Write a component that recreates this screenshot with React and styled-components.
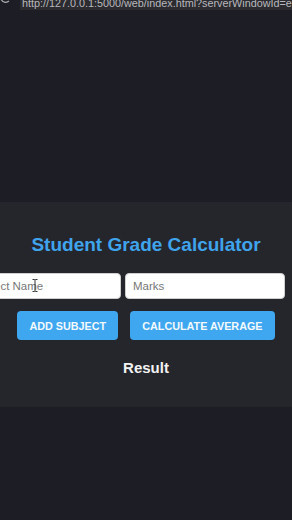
import React from "react";
import styled, { createGlobalStyle } from "styled-components";

const Global = createGlobalStyle`
  html, body { margin: 0; padding: 0; }
  body {
    background: #1d1e25;
    width: 292px;
    height: 520px;
    overflow: hidden;
    font-family: "Liberation Sans", Arial, sans-serif;
  }
`;

const Page = styled.div`
  width: 292px;
  height: 520px;
  display: flex;
  flex-direction: column;
  background: #1d1e25;
  overflow: hidden;
`;

const TopBar = styled.div`
  height: 10px;
  display: flex;
  align-items: flex-end;
  overflow: hidden;
  flex-shrink: 0;
`;

const ReloadSlot = styled.div`
  width: 20px;
  height: 10px;
  display: flex;
  align-items: flex-end;
`;

const UrlBox = styled.div`
  flex: 1;
  height: 10px;
  background: #2b2b30;
  display: flex;
  align-items: flex-end;
  overflow: hidden;
  padding-left: 2px;
`;

const UrlText = styled.span`
  color: #b9b9bd;
  font-size: 10.8px;
  line-height: 12px;
  white-space: nowrap;
  margin-bottom: 1px;
`;

const Card = styled.section`
  margin-top: 192px;
  height: 205px;
  background: #25262c;
  display: flex;
  flex-direction: column;
  align-items: center;
  padding-top: 32px;
  box-sizing: border-box;
  overflow: hidden;
  flex-shrink: 0;
`;

const Title = styled.h1`
  margin: 0;
  font-size: 19px;
  line-height: 22px;
  font-weight: 700;
  color: #3fa4ec;
  text-align: center;
`;

const InputRow = styled.div`
  align-self: stretch;
  display: flex;
  justify-content: flex-end;
  gap: 4px;
  padding-right: 7px;
  margin-top: 17px;
`;

const Field = styled.div`
  position: relative;
  flex-shrink: 0;
  width: ${(p) => p.$w}px;
`;

const Input = styled.input`
  width: 100%;
  height: 26px;
  box-sizing: border-box;
  border: 1px solid #cfcfcf;
  border-radius: 4px;
  background: #ffffff;
  padding: 0 7px;
  font-family: "Liberation Sans", Arial, sans-serif;
  font-size: 11.5px;
  color: #222;
  outline: none;
  &::placeholder { color: #777777; }
`;

const Cursor = styled.svg`
  position: absolute;
  left: ${(p) => p.$x}px;
  top: 6px;
`;

const ButtonRow = styled.div`
  display: flex;
  gap: 12px;
  margin-top: 12px;
`;

const Button = styled.button`
  height: 29px;
  padding: 0 12px;
  border: none;
  border-radius: 4px;
  background: #3ea7f0;
  color: #f4f9fd;
  font-family: "Liberation Sans", Arial, sans-serif;
  font-weight: 700;
  font-size: 10.8px;
  letter-spacing: 0;
  text-transform: uppercase;
  cursor: pointer;
`;

const Result = styled.h2`
  margin: 19px 0 0;
  font-size: 15px;
  line-height: 18px;
  font-weight: 700;
  color: #f2f2f2;
`;

export default function App() {
  return (
    <>
      <Global />
      <Page>
        <TopBar>
          <ReloadSlot>
            <svg width="10" height="10" viewBox="0 0 10 10">
              <path d="M1 -1 A5 5 0 0 0 9 1" fill="none" stroke="#a8a8ac" strokeWidth="1.3" />
            </svg>
          </ReloadSlot>
          <UrlBox>
            <UrlText>http://127.0.0.1:5000/web/index.html?serverWindowId=e</UrlText>
          </UrlBox>
        </TopBar>
        <Card>
          <Title>Student Grade Calculator</Title>
          <InputRow>
            <Field $w={158}>
              <Input placeholder="Subject Name" />
              <Cursor $x={69} width="6" height="13" viewBox="0 0 6 13">
                <path d="M0.5 0.5 H2.5 L3 1 L3.5 0.5 H5.5 M3 1 V12 M0.5 12.5 H2.5 L3 12 L3.5 12.5 H5.5" fill="none" stroke="#333" strokeWidth="1" />
              </Cursor>
            </Field>
            <Field $w={160}>
              <Input placeholder="Marks" />
            </Field>
          </InputRow>
          <ButtonRow>
            <Button>Add Subject</Button>
            <Button>Calculate Average</Button>
          </ButtonRow>
          <Result>Result</Result>
        </Card>
      </Page>
    </>
  );
}
